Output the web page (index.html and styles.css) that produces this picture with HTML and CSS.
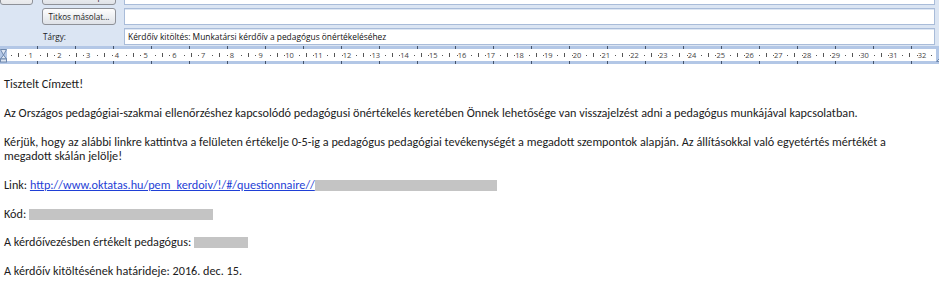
FILE: index.html
```html
<!DOCTYPE html>
<html lang="hu">

<head>
    <meta charset="UTF-8">
    <title>Kérdőív kitöltés</title>
    <link rel="stylesheet" href="styles.css">
</head>

<body>

    <!-- Message header -->
    <div class="header">
        <div class="row row-cut">
            <span class="stub"></span>
            <button class="btn">Másolatot kap...</button>
            <div class="field"></div>
        </div>
        <div class="row">
            <span></span>
            <button class="btn">Titkos másolat...</button>
            <div class="field"></div>
        </div>
        <div class="row">
            <span></span>
            <span class="label">Tárgy:</span>
            <div class="field">Kérdőív kitöltés: Munkatársi kérdőív a pedagógus önértékeléséhez</div>
        </div>
    </div>

    <!-- Ruler -->
    <div class="ruler">
        <svg class="indent" width="7" height="15" viewBox="0 0 7 15">
            <path d="M0.5 1.5h6l-3 5.5z" fill="#dfe7f3" stroke="#6f88ad" stroke-width="1"/>
            <path d="M3.5 7l3 4h-6z" fill="#dfe7f3" stroke="#6f88ad" stroke-width="1"/>
            <rect x="0.5" y="11" width="6" height="3" fill="#dfe7f3" stroke="#6f88ad" stroke-width="1"/>
        </svg>
        <div class="scale">
            <div class="nums">
                <span>1</span><span>2</span><span>3</span><span>4</span><span>5</span><span>6</span><span>7</span><span>8</span>
                <span>9</span><span>10</span><span>11</span><span>12</span><span>13</span><span>14</span><span>15</span><span>16</span>
                <span>17</span><span>18</span><span>19</span><span>20</span><span>21</span><span>22</span><span>23</span><span>24</span>
                <span>25</span><span>26</span><span>27</span><span>28</span><span>29</span><span>30</span><span>31</span><span>32</span>
            </div>
        </div>
        <svg class="right-marker" width="6" height="15" viewBox="0 0 6 15">
            <path d="M0.5 13.5l5-5v5z" fill="#dfe7f3" stroke="#6f88ad" stroke-width="1"/>
        </svg>
    </div>

    <!-- Message body -->
    <div class="mail">
        <p>Tisztelt Címzett!</p>
        <p>Az Országos pedagógiai-szakmai ellenőrzéshez kapcsolódó pedagógusi önértékelés keretében Önnek lehetősége van visszajelzést adni a pedagógus munkájával kapcsolatban.</p>
        <p>Kérjük, hogy az alábbi linkre kattintva a felületen értékelje 0-5-ig a pedagógus pedagógiai tevékenységét a megadott szempontok alapján. Az állításokkal való egyetértés mértékét a megadott skálán jelölje!</p>
        <p>Link: <a href="#">http://www.oktatas.hu/pem_kerdoiv/!/#/questionnaire//<span class="redact redact-link"></span></a></p>
        <p>Kód: <span class="redact redact-code"></span></p>
        <p>A kérdőívezésben értékelt pedagógus: <span class="redact redact-name"></span></p>
        <p>A kérdőív kitöltésének határideje: 2016. dec. 15.</p>
    </div>

</body>

</html>
```

FILE: styles.css
```css
/* General Reset */
* {
    margin: 0;
    padding: 0;
    box-sizing: border-box;
}

body {
    background: #fff;
    width: 939px;
    height: 292px;
    overflow: hidden;
    font-family: "Open Sans", "Liberation Sans", sans-serif;
}

/* Header */
.header {
    background: #dbe5f3;
    padding: 0 4px 1px 0;
    display: flex;
    flex-direction: column;
    gap: 3px;
}

.row {
    display: grid;
    grid-template-columns: 33px 75px 1fr;
    column-gap: 8px;
    height: 17px;
    align-items: center;
}

.row > :nth-child(2) {
    margin-left: 1px;
}

.row-cut {
    margin-top: -12px;
}

.stub {
    height: 17px;
    border: 1px solid #8e9198;
    border-radius: 3px;
    background: linear-gradient(#fdfdfd, #e6e7ea);
}

.btn {
    height: 17px;
    border: 1px solid #8e9198;
    border-radius: 3px;
    background: linear-gradient(#fdfdfd 0%, #eef0f3 50%, #dfe2e7 100%);
    font-family: "Open Sans", "Liberation Sans", sans-serif;
    font-size: 8.1px;
    color: #222;
    text-align: center;
}

.label {
    font-size: 8.1px;
    color: #222;
    padding-left: 1px;
}

.field {
    height: 17px;
    background: #fff;
    border: 1px solid #a9bcd9;
    box-shadow: inset 0 1px 0 #dde6f3;
    font-size: 8.4px;
    line-height: 13px;
    color: #111;
    padding: 1px 3px 0;
    white-space: nowrap;
}

/* Ruler */
.ruler {
    display: flex;
    background: #b3c7e6;
    padding: 3px 0 2px;
    height: 18px;
    background-image: repeating-linear-gradient(90deg, transparent 0 37px, #45546b 37px 38px, transparent 38px 35.94px);
}

.indent {
    display: block;
    flex: none;
    margin-top: -1px;
}

.right-marker {
    display: block;
    flex: none;
    margin-top: -1px;
}

.scale {
    flex: 1;
    height: 12px;
    background-color: #fff;
    background-image:
        repeating-linear-gradient(90deg, transparent 0 4px, #555 4px 5px, transparent 5px 14.375px),
        repeating-linear-gradient(90deg, transparent 0 11px, #555 11px 12px, transparent 12px 28.75px);
    background-size: 100% 1px, 100% 4px;
    background-position: 0 6px, 0 4px;
    background-repeat: no-repeat;
}

.nums {
    display: flex;
    padding-left: 9.4px;
}

.nums span {
    flex: none;
    width: 28.75px;
    text-align: center;
    font-size: 7.5px;
    line-height: 12px;
    color: #444;
    font-family: "Open Sans", "Liberation Sans", sans-serif;
}

/* Message body */
.mail {
    padding: 13px 4px 0;
    font-family: Carlito, Calibri, Lato, sans-serif;
    font-size: 12.2px;
    line-height: 14.4px;
    color: #1b1b1b;
    display: flex;
    flex-direction: column;
    gap: 14.4px;
}

.mail a {
    color: #1f3fd6;
    text-decoration: underline;
}

.redact {
    display: inline-block;
    height: 11px;
    vertical-align: -2px;
    background: #c4c4c4;
}

.redact-link {
    width: 182px;
}

.redact-code {
    width: 184px;
}

.redact-name {
    width: 54px;
}
```
